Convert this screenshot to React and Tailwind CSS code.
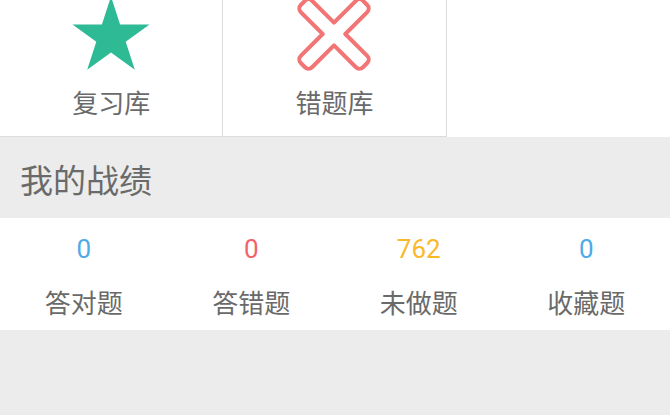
export default function App() {
  const stats = [
    { value: "0", label: "答对题", color: "text-[#4dabe6]" },
    { value: "0", label: "答错题", color: "text-[#f1636b]" },
    { value: "762", label: "未做题", color: "text-[#fab92a]" },
    { value: "0", label: "收藏题", color: "text-[#4dabe6]" },
  ];

  return (
    <div
      className="min-h-screen bg-[#ececec] overflow-hidden"
      style={{ fontFamily: '"Noto Sans CJK SC", "Noto Sans", sans-serif' }}
    >
      {/* library tiles */}
      <div className="grid grid-cols-3 h-[137px] bg-white">
        <div className="flex flex-col items-center border-r border-b border-[#dcdcdc]">
          <svg width="82" height="82" viewBox="-41 -41 82 82" className="-mt-[4px]">
            <polygon
              fill="#2eba94"
              points="0,-40.5 9.1,-12.5 38.5,-12.5 14.7,4.8 23.8,32.8 0,15.5 -23.8,32.8 -14.7,4.8 -38.5,-12.5 -9.1,-12.5"
            />
          </svg>
          <span className="mt-[11px] text-[26px] leading-[26px] text-[#6a6a6a]">复习库</span>
        </div>
        <div className="flex flex-col items-center border-r border-b border-[#dcdcdc]">
          <svg width="82" height="82" viewBox="-41 -38 82 82" className="-mt-[4px]">
            <g transform="rotate(45)">
              <path
                fill="none"
                stroke="#f27474"
                strokeWidth="4"
                strokeLinejoin="round"
                d="M -8 -8 L -8 -39 A 5 5 0 0 1 -3 -44 L 3 -44 A 5 5 0 0 1 8 -39 L 8 -8 L 39 -8 A 5 5 0 0 1 44 -3 L 44 3 A 5 5 0 0 1 39 8 L 8 8 L 8 39 A 5 5 0 0 1 3 44 L -3 44 A 5 5 0 0 1 -8 39 L -8 8 L -39 8 A 5 5 0 0 1 -44 3 L -44 -3 A 5 5 0 0 1 -39 -8 Z"
              />
            </g>
          </svg>
          <span className="mt-[11px] text-[26px] leading-[26px] text-[#6a6a6a]">错题库</span>
        </div>
        <div></div>
      </div>

      {/* section header */}
      <div className="h-[81px] flex items-center px-[20px] pt-[3px]">
        <h2 className="text-[33px] leading-[34px] text-[#6a6a6a]">我的战绩</h2>
      </div>

      {/* stats */}
      <div className="grid grid-cols-4 h-[112px] bg-white">
        {stats.map((s) => (
          <div key={s.label} className="flex flex-col items-center pt-[18px]">
            <span
              className={`text-[26px] leading-[26px] ${s.color}`}
              style={{ fontFamily: "Roboto, sans-serif" }}
            >
              {s.value}
            </span>
            <span className="mt-[27px] text-[26px] leading-[26px] text-[#6a6a6a]">{s.label}</span>
          </div>
        ))}
      </div>
    </div>
  );
}
